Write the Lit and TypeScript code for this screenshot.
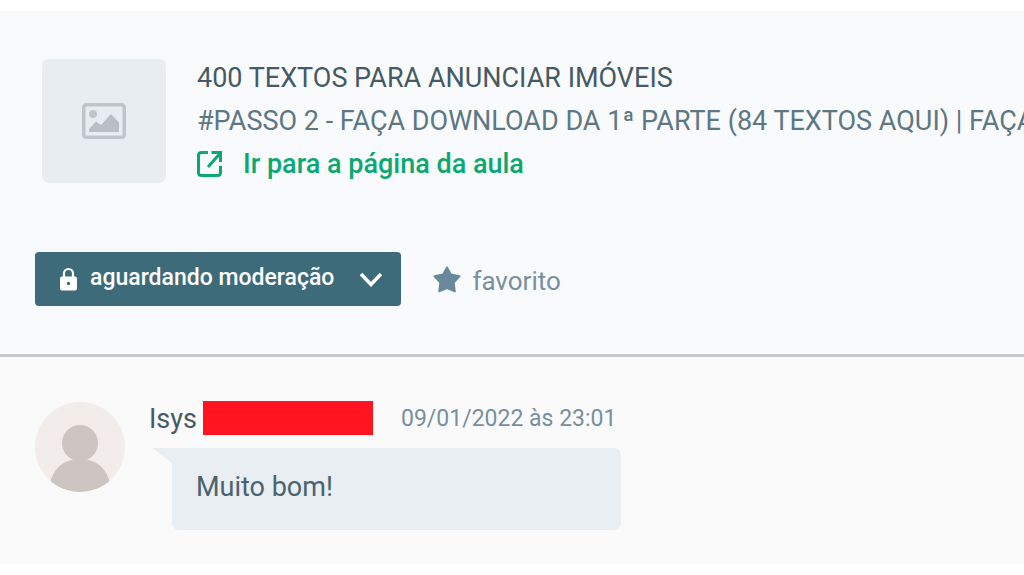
import { LitElement, html, css } from "lit";
import { customElement, property } from "lit/decorators.js";

@customElement("lesson-header")
class LessonHeader extends LitElement {
  @property() course = "";
  @property() lesson = "";

  static styles = css`
    :host {
      display: block;
      padding: 45px 0 48px 35px;
      background: #f9fafc;
      border-bottom: 3px solid #c2cacf;
      overflow: hidden;
    }
    .lesson {
      display: flex;
      align-items: center;
      gap: 31px;
      padding-left: 7px;
    }
    .thumb {
      flex: none;
      display: grid;
      place-items: center;
      width: 124px;
      height: 124px;
      border-radius: 7px;
      background: #e7edf1;
    }
    .info {
      min-width: 0;
      flex: 1;
      padding-top: 1px;
      line-height: 43px;
      white-space: nowrap;
    }
    .course,
    .name {
      margin: 0;
      font-size: 27px;
      font-weight: 400;
      overflow: hidden;
    }
    .course {
      color: #455a64;
    }
    .name {
      color: #5d7783;
    }
    .link {
      display: flex;
      align-items: center;
      gap: 20px;
      color: #0ba872;
      font-size: 27px;
      font-weight: 500;
      line-height: 42px;
      text-decoration: none;
    }
    .actions {
      display: flex;
      align-items: center;
      gap: 32px;
      margin-top: 67px;
    }
    button {
      display: flex;
      align-items: center;
      border: 0;
      font: inherit;
      cursor: pointer;
    }
    .status {
      height: 54px;
      padding: 0 18px 0 24px;
      border-radius: 4px;
      background: #3d6b79;
      color: #fff;
      font-size: 23px;
      font-weight: 500;
    }
    .status .label {
      margin: 0 25px 0 12px;
      padding-bottom: 4px;
    }
    .favorite {
      gap: 11px;
      padding: 4px 0 0;
      background: none;
      color: #78909c;
      font-size: 26px;
    }
    .star {
      color: #67899a;
      margin-bottom: 4px;
    }
    svg {
      display: block;
      flex: none;
    }
  `;

  render() {
    return html`
      <div class="lesson">
        <div class="thumb">
          <svg width="44" height="36" viewBox="0 0 44 36" aria-hidden="true">
            <rect x="1.75" y="1.75" width="40.5" height="32.5" rx="2.5" fill="none" stroke="#bfc5c9" stroke-width="3.5" />
            <circle cx="11" cy="11" r="4" fill="#bfc5c9" />
            <path d="M7 29V26L14 18.5L19 22L29 11L37 19.5V29Z" fill="#b9c0c5" />
          </svg>
        </div>
        <div class="info">
          <h1 class="course">${this.course}</h1>
          <p class="name">${this.lesson}</p>
          <a class="link" href="#aula">
            <svg width="26" height="28" viewBox="0 0 26 28" fill="none" stroke="currentColor" stroke-width="3" aria-hidden="true">
              <path d="M11 2.5H4.5Q1.5 2.5 1.5 5.5V22.5Q1.5 25.5 4.5 25.5H20.5Q23.5 25.5 23.5 22.5V16" />
              <path d="M11 17L22.5 4" />
              <path d="M14.5 2.5H23.5V12" />
            </svg>
            Ir para a página da aula
          </a>
        </div>
      </div>
      <div class="actions">
        <button class="status" type="button" aria-haspopup="listbox">
          <svg width="19" height="24" viewBox="0 0 19 24" aria-hidden="true">
            <path d="M5 11V6.5A4.5 4.5 0 0 1 14 6.5V11" fill="none" stroke="#fff" stroke-width="2.2" />
            <rect x="1" y="9.5" width="17" height="14" rx="2" fill="#fff" />
            <circle cx="9.5" cy="16.5" r="1.7" fill="#3d6b79" />
          </svg>
          <span class="label">aguardando moderação</span>
          <svg width="24" height="16" viewBox="0 0 24 16" fill="none" stroke="#fff" stroke-width="3.5" aria-hidden="true">
            <path d="M2 3L12 13.5L22 3" />
          </svg>
        </button>
        <button class="favorite" type="button">
          <svg class="star" width="28" height="27" viewBox="0 0 28 27" fill="currentColor" stroke="currentColor" stroke-width="2" stroke-linejoin="round" aria-hidden="true">
            <path d="M14 1.5L17.9 8.6L26.5 10.3L20.6 16.5L21.8 25.3L14 22L6.2 25.3L7.4 16.5L1.5 10.3L10.1 8.6Z" />
          </svg>
          favorito
        </button>
      </div>
    `;
  }
}

@customElement("lesson-comment")
class LessonComment extends LitElement {
  @property() author = "";
  @property() date = "";
  @property() text = "";

  static styles = css`
    :host {
      display: flex;
      align-items: flex-start;
      gap: 24px;
      padding: 44px 35px 34px;
      background: #fafafa;
    }
    .avatar {
      flex: none;
      margin-top: 1px;
    }
    .meta {
      display: flex;
      align-items: center;
      height: 34px;
      padding-right: 5px;
    }
    .author {
      padding-top: 2px;
      color: #455a64;
      font-size: 27px;
    }
    .redacted {
      width: 170px;
      height: 34px;
      margin: 0 28px 0 6px;
      background: #ff141f;
    }
    .date {
      color: #78909c;
      font-size: 23px;
    }
    .bubble {
      position: relative;
      margin: 13px 0 0 23px;
      padding: 18px 24px 22px;
      border-radius: 0 7px 7px 7px;
      background: #e9eef2;
      color: #4b6370;
      font-size: 27px;
      line-height: 42px;
    }
    .bubble::before {
      content: "";
      position: absolute;
      top: 0;
      right: 100%;
      width: 20px;
      height: 15px;
      background: inherit;
      clip-path: polygon(0 0, 100% 0, 100% 100%);
    }
    p {
      margin: 0;
    }
  `;

  render() {
    return html`
      <svg class="avatar" width="90" height="90" viewBox="0 0 90 90" aria-hidden="true">
        <clipPath id="round"><circle cx="45" cy="45" r="45" /></clipPath>
        <g clip-path="url(#round)">
          <rect width="90" height="90" fill="#f2edea" />
          <circle cx="45" cy="41" r="18" fill="#cdc5c1" />
          <path d="M14 84Q20 57 45 57Q70 57 76 84V90H14Z" fill="#cdc5c1" />
        </g>
      </svg>
      <div class="body">
        <div class="meta">
          <span class="author">${this.author}</span>
          <span class="redacted"></span>
          <time class="date">${this.date}</time>
        </div>
        <div class="bubble"><p>${this.text}</p></div>
      </div>
    `;
  }
}

@customElement("app-root")
class AppRoot extends LitElement {
  static styles = css`
    :host {
      display: block;
      padding-top: 11px;
      background: #fff;
      font-family: Roboto, "Liberation Sans", sans-serif;
      overflow: hidden;
    }
  `;

  render() {
    return html`
      <main>
        <lesson-header
          course="400 TEXTOS PARA ANUNCIAR IMÓVEIS"
          lesson="#PASSO 2 - FAÇA DOWNLOAD DA 1ª PARTE (84 TEXTOS AQUI) | FAÇA"
        ></lesson-header>
        <lesson-comment author="Isys" date="09/01/2022 às 23:01" text="Muito bom!"></lesson-comment>
      </main>
    `;
  }
}
